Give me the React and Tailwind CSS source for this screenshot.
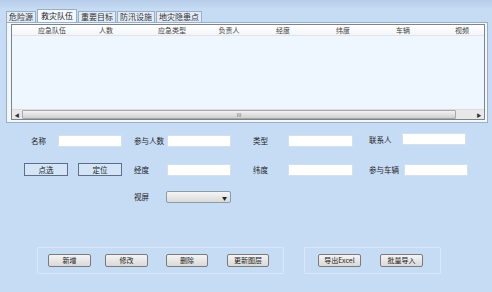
import React from 'react';

const tabs = ['危险源', '救灾队伍', '重要目标', '防汛设施', '地灾隐患点'];
const cols = [
  { name: '', w: 23 },
  { name: '应急队伍', w: 34 },
  { name: '人数', w: 74 },
  { name: '应急类型', w: 58 },
  { name: '负责人', w: 56 },
  { name: '经度', w: 52 },
  { name: '纬度', w: 68 },
  { name: '车辆', w: 52 },
  { name: '视频', w: 66 },
];

function Field({ w = 64, className = '' }) {
  return <div className={`h-[12px] bg-white border border-[#d6e0ec] ${className}`} style={{ width: w }} />;
}

function Btn({ children, w = 43, className = '' }) {
  return (
    <div
      className={`h-[13px] flex items-center justify-center rounded-[2px] border border-[#7a7a7a] bg-gradient-to-b from-[#f4f4f4] to-[#d9d9d9] text-[7px] text-[#222] ${className}`}
      style={{ width: w }}
    >
      {children}
    </div>
  );
}

function ToolBtn({ children, className = '' }) {
  return (
    <div className={`w-[44px] h-[13px] flex items-center justify-center border border-[#5b6f8a] bg-[#d5e5f8] text-[7.5px] text-[#222] ${className}`}>
      {children}
    </div>
  );
}

export default function App() {
  return (
    <div
      className="w-[492px] h-[292px] overflow-hidden bg-[#c6dbf4] text-[#333] leading-none"
      style={{ fontFamily: '"Noto Sans CJK SC", "Liberation Sans", sans-serif' }}
    >
      {/* 顶部渐变条 */}
      <div className="h-[9px] bg-gradient-to-b from-[#b6cde9] to-[#c6dbf4]" />

      {/* 选项卡 */}
      <div className="flex items-end pl-[6px] h-[13px]">
        {tabs.map((t, i) => (
          <div
            key={t}
            className={
              i === 1
                ? 'h-[13px] px-[3px] flex items-center border border-b-0 border-[#9aaec6] bg-[#f4f9ff] text-[8px] text-[#222] mr-[1px]'
                : 'h-[11px] px-[2px] flex items-center border border-b-0 border-[#9aaec6] bg-[#e2ecf8] text-[8px] text-[#333] mr-[1px]'
            }
          >
            {t}
          </div>
        ))}
      </div>

      {/* 面板 */}
      <div className="ml-[6px] w-[482px] h-[101px] border border-[#9aaec6] bg-[#f2f8ff] pl-[4px] pt-[1px]">
        <div className="w-[474px] h-[96px] border border-[#7d848e] bg-[#eef6ff] flex flex-col overflow-hidden">
          <div className="h-[11px] flex shrink-0 border-b border-[#e0e4ea] bg-gradient-to-b from-[#ffffff] to-[#f3f5f8]">
            {cols.map((c, i) => (
              <div
                key={i}
                className="h-full shrink-0 flex items-center justify-center text-[7px] text-[#444]"
                style={{ width: c.w }}
              >
                {c.name}
              </div>
            ))}
          </div>
          <div className="flex-1" />
          {/* 横向滚动条 */}
          <div className="h-[10px] flex items-center bg-[#e8e8e8] border-t border-[#dcdcdc]">
            <div className="w-[10px] flex items-center justify-center text-[5px] text-[#333]">◀</div>
            <div className="w-[434px] h-[9px] rounded-[1px] border border-[#a8a8a8] bg-gradient-to-b from-[#f3f3f3] to-[#d0d0d0] flex items-center justify-center text-[5px] text-[#666]">
              III
            </div>
            <div className="flex-1" />
            <div className="w-[10px] flex items-center justify-center text-[5px] text-[#333]">▶</div>
          </div>
        </div>
      </div>

      {/* 表单 */}
      <div className="mt-[12px] flex items-center text-[7.5px] text-[#222]">
        <span className="ml-[31px] w-[27px]">名称</span>
        <Field />
        <span className="ml-[12px] w-[33px]">参与人数</span>
        <Field />
        <span className="ml-[22px] w-[35px]">类型</span>
        <Field w={65} />
        <span className="ml-[16px] w-[33px] -mt-[3px]">联系人</span>
        <Field className="-mt-[4px]" />
      </div>

      <div className="mt-[16px] flex items-center text-[7.5px] text-[#222]">
        <ToolBtn className="ml-[24px]">点选</ToolBtn>
        <ToolBtn className="ml-[10px]">定位</ToolBtn>
        <span className="ml-[12px] w-[33px]">经度</span>
        <Field />
        <span className="ml-[22px] w-[35px]">纬度</span>
        <Field w={65} />
        <span className="ml-[16px] w-[35px]">参与车辆</span>
        <Field />
      </div>

      <div className="mt-[15px] flex items-center text-[7.5px] text-[#222]">
        <span className="ml-[134px] w-[32px]">视屏</span>
        <div className="w-[65px] h-[12px] rounded-[2px] border border-[#8e9aa8] bg-gradient-to-b from-[#f5f5f5] to-[#dadada] flex items-center justify-end pr-[3px] text-[5px] text-[#222]">
          ▼
        </div>
      </div>

      {/* 按钮组 */}
      <div className="mt-[44px] flex">
        <div className="ml-[37px] w-[247px] h-[27px] border border-[#dbe7f6] rounded-[1px] flex items-center">
          <Btn className="ml-[10px]">新增</Btn>
          <Btn className="ml-[14px]">修改</Btn>
          <Btn className="ml-[18px]" w={42}>删除</Btn>
          <Btn className="ml-[19px]" w={42}>更新图层</Btn>
        </div>
        <div className="ml-[20px] w-[137px] h-[27px] border border-[#dbe7f6] rounded-[1px] flex items-center">
          <Btn className="ml-[13px]">导出Excel</Btn>
          <Btn className="ml-[19px]">批量导入</Btn>
        </div>
      </div>
    </div>
  );
}
